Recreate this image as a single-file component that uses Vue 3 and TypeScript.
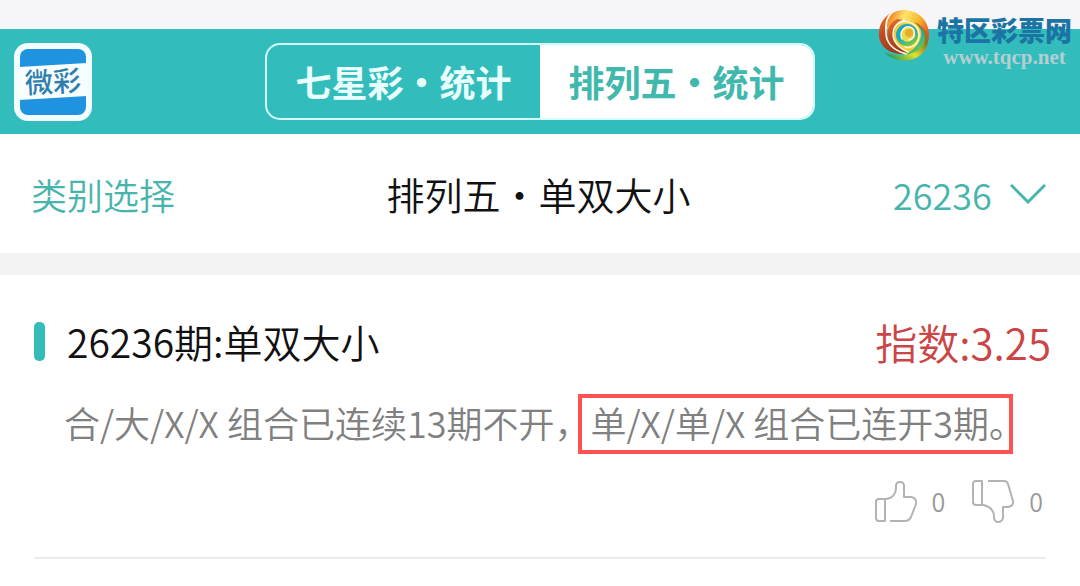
<script setup lang="ts">
import { ref } from 'vue'

interface Tab { id: string; label: string }

const tabs: Tab[] = [
  { id: 'qxc', label: '七星彩·统计' },
  { id: 'pl5', label: '排列五·统计' },
]
const activeTab = ref('pl5')
const issue = ref('26236')
const likes = ref(0)
const dislikes = ref(0)
</script>

<template>
  <div class="page" lang="zh-CN">
    <div class="status-strip"></div>
    <header class="topbar">
      <svg class="app-icon" viewBox="0 0 78 78" role="img" aria-label="微彩">
        <rect width="78" height="78" rx="14" fill="#f2fdff" />
        <rect x="6" y="6" width="66" height="66" rx="8" fill="#1f93e0" />
        <path d="M5 24 L73 20 V53 L5 57 Z" fill="#f8feff" />
        <text x="39" y="49" text-anchor="middle" class="app-icon-text" transform="rotate(-3 39 39)">微彩</text>
      </svg>
      <nav class="tabs">
        <button
          v-for="tab in tabs"
          :key="tab.id"
          type="button"
          class="tab"
          :class="{ active: tab.id === activeTab }"
          @click="activeTab = tab.id"
        >{{ tab.label }}</button>
      </nav>
      <div class="brand">
        <svg class="brand-mark" viewBox="0 0 52 52" aria-hidden="true">
          <defs>
            <linearGradient id="gold" x1="0" y1="0.2" x2="1" y2="0.6">
              <stop offset="0" stop-color="#ee7a24" />
              <stop offset="0.35" stop-color="#ffe66a" />
              <stop offset="0.7" stop-color="#f6b32a" />
              <stop offset="1" stop-color="#e2561c" />
            </linearGradient>
            <linearGradient id="rust" x1="0" y1="0" x2="0.4" y2="1">
              <stop offset="0" stop-color="#ee7a30" />
              <stop offset="0.5" stop-color="#c04a22" />
              <stop offset="1" stop-color="#9c3c22" />
            </linearGradient>
            <linearGradient id="leaf" x1="0" y1="0.8" x2="1" y2="0">
              <stop offset="0" stop-color="#1f9a58" />
              <stop offset="0.4" stop-color="#e4e028" />
              <stop offset="0.7" stop-color="#8a7a24" />
              <stop offset="1" stop-color="#e0561c" />
            </linearGradient>
            <linearGradient id="wave" x1="0" y1="0" x2="0.6" y2="1">
              <stop offset="0" stop-color="#1a9cd0" />
              <stop offset="0.6" stop-color="#1cb0b8" />
              <stop offset="1" stop-color="#7cc83c" />
            </linearGradient>
          </defs>
          <path d="M15 4 C29 -4 51 5 51 26 C51 30 50 34 48 37 C48 22 40 11 27 11 C18 11 12 17 10 24 C8 16 9 9 15 4Z" fill="url(#gold)" />
          <path d="M20 14 C32 7 45 15 46 27 C46 38 38 45 27 45 C16 42 12 24 20 14Z" fill="#f2cf36" />
          <path d="M13 4 C4 9 0 18 1 28 C3 39 13 46 27 45 C15 41 8 34 8 24 C7 16 8 9 13 4Z" fill="url(#rust)" />
          <path d="M19 10 C11 14 8 22 10 29 C12 38 20 43 30 44 C21 39 15 33 15 25 C15 18 19 13 26 11 Z" fill="url(#rust)" />
          <path d="M6 43 C19 49 37 47 42 36 C47 27 43 18 36 13 C47 17 53 27 49 37 C43 54 18 56 6 43Z" fill="url(#leaf)" />
          <path d="M41 16 C47 27 41 38 28 45 C36 45 43 41 46 34 C48 28 46 21 41 16Z" fill="url(#wave)" />
          <circle cx="29" cy="26" r="11" fill="url(#wave)" />
          <path d="M24 29 C22 22 26 17 32 18 C38 20 39 28 34 31 C30 34 25 33 24 29Z" fill="#e8dc4a" />
          <path d="M13 4 C8 9 7 16 8 24 C8 34 15 41 28 45 M26 11 C18 14 15 19 15 25 C15 33 21 39 30 43" class="swirl-line" />
          <path d="M20 15 C28 9 41 15 41 26 C41 35 34 40 27 38" class="swirl-line" />
          <path d="M24 30 C21 23 26 17 32 18 C38 20 38 29 31 31" class="swirl-line" />
          <circle cx="31" cy="24" r="4" fill="#edab2c" />
        </svg>
        <div class="brand-words">
          <span class="brand-name">特区彩票网</span>
          <span class="brand-url">www.tqcp.net</span>
        </div>
      </div>
    </header>

    <section class="filter">
      <button type="button" class="category">类别选择</button>
      <h1 class="title">排列五·单双大小</h1>
      <label class="issue">
        <select v-model="issue" class="issue-select" aria-label="期号">
          <option value="26236">26236</option>
        </select>
        <svg class="chevron" viewBox="0 0 36 20" aria-hidden="true">
          <path d="M1 1 L18 18 L35 1" />
        </svg>
      </label>
    </section>

    <main class="list">
      <article class="item">
        <div class="item-head">
          <h2 class="item-title">26236期:单双大小</h2>
          <span class="index">指数:3.25</span>
        </div>
        <p class="desc">合/大/X/X 组合已连续13期不开，<span class="marked">单/X/单/X 组合已连开3期。</span></p>
        <div class="votes">
          <button type="button" class="vote" aria-label="赞" @click="likes++">
            <svg class="thumb" viewBox="0 0 44 44" aria-hidden="true">
              <path d="M11 20 V42 H5 Q2 42 2 39 V23 Q2 20 5 20 H12 C19 19 22 14 22 9 V7 Q22 3 26 3 Q30 3 30 7 V18 H37 Q43 19 42 25 L37 38 Q35 42 31 42 H16" />
            </svg>
            <span>{{ likes }}</span>
          </button>
          <button type="button" class="vote" aria-label="踩" @click="dislikes++">
            <svg class="thumb" viewBox="0 0 44 44" aria-hidden="true">
              <path d="M11 26 V2 H5 Q2 2 2 5 V23 Q2 26 5 26 H12 C19 27 23 32 23 37 V39 Q24 43 27 43 Q31 43 32 39 V28 H37 Q43 27 42 22 L37 5 Q36 2 33 2 H17" />
            </svg>
            <span>{{ dislikes }}</span>
          </button>
        </div>
      </article>
    </main>
  </div>
</template>

<style>
body {
  margin: 0;
  background: #fff;
}
</style>

<style scoped>
.page {
  position: relative;
  font-family: "Noto Sans CJK SC", sans-serif;
  font-weight: 350;
  color: #111;
}
button,
select {
  margin: 0;
  padding: 0;
  border: 0;
  background: none;
  font: inherit;
  color: inherit;
  cursor: pointer;
}
h1,
h2,
p {
  margin: 0;
  font-weight: inherit;
}
.status-strip {
  height: 29px;
  background: #f6f5f7;
}
.topbar {
  display: grid;
  grid-template-columns: 1fr 550px 1fr;
  align-items: center;
  height: 105px;
  padding: 0 14px;
  box-sizing: border-box;
  background: #32bdbc;
}
.app-icon {
  width: 78px;
  height: 78px;
}
.app-icon-text {
  font-size: 28px;
  font-weight: 500;
  fill: #2f7fae;
}
.tabs {
  display: flex;
  height: 77px;
  box-sizing: border-box;
  border: 2px solid #d4fbfa;
  border-radius: 15px;
  overflow: hidden;
}
.tab {
  flex: 1;
  padding-bottom: 2px;
  font-size: 36px;
  font-weight: 700;
  line-height: 48px;
  color: #e8fffe;
}
.tab.active {
  background: #fff;
  color: #40b8ae;
}
.brand {
  position: absolute;
  top: 9px;
  right: 8px;
  display: flex;
  gap: 7px;
}
.brand-mark {
  width: 52px;
  height: 52px;
}
.swirl-line {
  fill: none;
  stroke: #fff4dc;
  stroke-width: 1.5;
  stroke-linecap: round;
}
.brand-words {
  display: flex;
  flex-direction: column;
  padding-top: 6px;
}
.brand-name {
  font-size: 27px;
  font-weight: 900;
  line-height: 30px;
  color: #1c74a4;
}
.brand-url {
  font-family: "Liberation Serif", serif;
  font-size: 21px;
  font-weight: 700;
  line-height: 24px;
  text-align: center;
  color: #b4cfd2;
}
.filter {
  display: grid;
  grid-template-columns: 1fr auto 1fr;
  align-items: center;
  height: 119px;
  padding: 0 34px 0 31px;
  font-size: 36px;
  color: #48b5ad;
}
.category {
  justify-self: start;
}
.title {
  font-size: 38px;
  color: #111;
}
.issue {
  justify-self: end;
  display: flex;
  align-items: center;
  gap: 18px;
}
.issue-select {
  appearance: none;
}
.chevron {
  width: 36px;
  height: 20px;
  fill: none;
  stroke: #48b5ad;
  stroke-width: 3;
}
.list {
  border-top: 22px solid #f3f3f3;
  padding: 0 34px;
}
.item {
  border-bottom: 2px solid #ececec;
}
.item-head {
  display: flex;
  justify-content: space-between;
  align-items: baseline;
  margin-right: -5px;
  padding-top: 36px;
  line-height: 60px;
}
.item-title {
  display: flex;
  align-items: center;
  gap: 22px;
  font-size: 39px;
}
.item-title::before {
  content: "";
  width: 11px;
  height: 39px;
  border-radius: 5px;
  background: #34bdb8;
}
.index {
  padding-top: 2px;
  font-size: 42px;
  line-height: 58px;
  color: #cb4546;
}
.item-head {
  align-items: center;
}
.desc {
  padding: 24px 0 0 30px;
  font-size: 36px;
  line-height: 54px;
  white-space: nowrap;
  color: #808080;
}
.marked {
  position: relative;
}
.marked::after {
  content: "";
  position: absolute;
  inset: -2px 12px -6px -12px;
  border: 4px solid #ff5252;
}
.votes {
  display: flex;
  justify-content: flex-end;
  gap: 26px;
  padding: 30px 3px 34px;
}
.vote {
  display: flex;
  align-items: center;
  gap: 14px;
  font-size: 25px;
  line-height: 44px;
  color: #999;
}
.thumb {
  width: 44px;
  height: 44px;
  fill: none;
  stroke: #b3b3b3;
  stroke-width: 2;
  stroke-linejoin: round;
}
</style>
